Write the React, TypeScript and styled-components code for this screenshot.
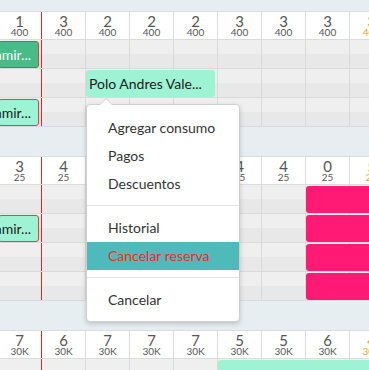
import React from "react";
import styled, { createGlobalStyle } from "styled-components";

const Global = createGlobalStyle`
  html, body {
    margin: 0;
    padding: 0;
    background: #e7eef1;
    overflow: hidden;
    font-family: Lato, "Liberation Sans", sans-serif;
  }
`;

const COL = 44;
const COLS = 9;

const Page = styled.div`
  position: relative;
  width: 369px;
  height: 370px;
  overflow: hidden;
`;

const Board = styled.div`
  margin-left: -2px;
  width: ${COL * COLS}px;
`;

const Band = styled.div<{ $h: number }>`
  height: ${(p) => p.$h}px;
  background: #e7eef1;
`;

const HeadRow = styled.div`
  display: grid;
  grid-template-columns: repeat(${COLS}, ${COL}px);
  height: 29px;
  background: #fff;
  border-top: 1px solid #dcdcdc;
  border-bottom: 1px solid #dcdcdc;
  box-sizing: border-box;
`;

const HeadCell = styled.div<{ $today?: boolean; $weekend?: boolean }>`
  display: flex;
  flex-direction: column;
  align-items: center;
  justify-content: center;
  border-right: 1px solid ${(p) => (p.$today ? "#e0262b" : "#dcdcdc")};
  color: ${(p) => (p.$weekend ? "#f0a030" : "#555")};
`;

const Num = styled.span`
  font-size: 15px;
  line-height: 12px;
  margin-top: 2px;
`;

const Sub = styled.span`
  font-size: 10px;
  line-height: 11px;
`;

const Row = styled.div`
  display: grid;
  grid-template-columns: repeat(${COLS}, ${COL}px);
  grid-template-rows: 28px;
  border-bottom: 1px solid #dadada;
  background: linear-gradient(#efefef 50%, #e8e8e8 50%);
`;

const Cell = styled.div<{ $col: number; $today?: boolean }>`
  grid-row: 1;
  grid-column: ${(p) => p.$col};
  border-right: 1px solid ${(p) => (p.$today ? "#e0262b" : "#dadada")};
`;

const TONES = {
  green: { bg: "#48bb89", fg: "#fff" },
  mint: { bg: "#9ff3d5", fg: "#1c1c1c" },
  pink: { bg: "#ff1a75", fg: "#fff" },
};

type Tone = keyof typeof TONES;

const Block = styled.div<{
  $start: number;
  $span: number;
  $tone: Tone;
  $flag?: boolean;
  $end?: boolean;
}>`
  grid-row: 1;
  grid-column: ${(p) => p.$start} / span ${(p) => p.$span};
  z-index: 1;
  margin: ${(p) => (p.$tone === "pink" ? "1px 0 0 0" : "1px 3px 0 0")};
  display: flex;
  align-items: center;
  justify-content: ${(p) => (p.$end ? "flex-end" : "flex-start")};
  padding: ${(p) => (p.$end ? "0 7px 0 3px" : "0 3px")};
  overflow: hidden;
  white-space: nowrap;
  font-size: 14px;
  background: ${(p) => TONES[p.$tone].bg};
  color: ${(p) => TONES[p.$tone].fg};
  border: ${(p) => (p.$flag ? "1px solid #f0393d" : "none")};
  border-radius: 3px;
  box-sizing: border-box;
`;

const Menu = styled.div`
  position: absolute;
  left: 86px;
  top: 104px;
  width: 154px;
  padding: 9px 0 7px;
  background: #fff;
  border: 1px solid #cfcfcf;
  border-radius: 4px;
  box-shadow: 0 2px 5px rgba(0, 0, 0, 0.18);
  box-sizing: border-box;
  z-index: 5;

  &::before,
  &::after {
    content: "";
    position: absolute;
    left: 13px;
    border-left: 6px solid transparent;
    border-right: 6px solid transparent;
  }
  &::before {
    top: -7px;
    border-bottom: 6px solid #cfcfcf;
  }
  &::after {
    top: -6px;
    border-bottom: 6px solid #fff;
  }
`;

const Item = styled.div<{ $active?: boolean }>`
  height: 28px;
  line-height: 28px;
  padding-left: 21px;
  font-size: 14px;
  color: ${(p) => (p.$active ? "#ff2424" : "#333")};
  background: ${(p) => (p.$active ? "#4fbaba" : "transparent")};
`;

const Divider = styled.div`
  height: 1px;
  margin: 7px 0 8px;
  background: #e5e5e5;
`;

type B = { start: number; span: number; tone: Tone; label?: string; flag?: boolean; end?: boolean };

const sections: { gap: number; nums: number[]; sub: string; rows: B[][] }[] = [
  {
    gap: 11,
    nums: [1, 3, 2, 2, 2, 3, 3, 3, 3],
    sub: "400",
    rows: [
      [{ start: 1, span: 1, tone: "green", label: "Ramir...", flag: true, end: true }],
      [{ start: 3, span: 3, tone: "mint", label: "Polo Andres Vale..." }],
      [{ start: 1, span: 1, tone: "mint", label: "Ramir...", flag: true, end: true }],
    ],
  },
  {
    gap: 29,
    nums: [3, 4, 4, 4, 4, 4, 4, 0, 5],
    sub: "25",
    rows: [
      [{ start: 8, span: 2, tone: "pink" }],
      [
        { start: 1, span: 1, tone: "mint", label: "Ramir...", flag: true, end: true },
        { start: 8, span: 2, tone: "pink" },
      ],
      [{ start: 8, span: 2, tone: "pink" }],
      [{ start: 8, span: 2, tone: "pink" }],
    ],
  },
  {
    gap: 29,
    nums: [7, 6, 7, 7, 7, 5, 5, 6, 4],
    sub: "30K",
    rows: [[{ start: 6, span: 4, tone: "mint" }]],
  },
];

const cols = Array.from({ length: COLS }, (_, i) => i);

export default function App() {
  return (
    <Page>
      <Global />
      <Board>
        {sections.map((s, si) => (
          <div key={si}>
            <Band $h={s.gap} />
            <HeadRow>
              {s.nums.map((n, i) => (
                <HeadCell key={i} $today={i === 0} $weekend={i === COLS - 1}>
                  <Num>{n}</Num>
                  <Sub>{s.sub}</Sub>
                </HeadCell>
              ))}
            </HeadRow>
            {s.rows.map((blocks, ri) => (
              <Row key={ri}>
                {cols.map((c) => (
                  <Cell key={c} $col={c + 1} $today={c === 0} />
                ))}
                {blocks.map((b, bi) => (
                  <Block
                    key={bi}
                    $start={b.start}
                    $span={b.span}
                    $tone={b.tone}
                    $flag={b.flag}
                    $end={b.end}
                  >
                    {b.label}
                  </Block>
                ))}
              </Row>
            ))}
          </div>
        ))}
      </Board>
      <Menu>
        <Item>Agregar consumo</Item>
        <Item>Pagos</Item>
        <Item>Descuentos</Item>
        <Divider />
        <Item>Historial</Item>
        <Item $active>Cancelar reserva</Item>
        <Divider />
        <Item>Cancelar</Item>
      </Menu>
    </Page>
  );
}
